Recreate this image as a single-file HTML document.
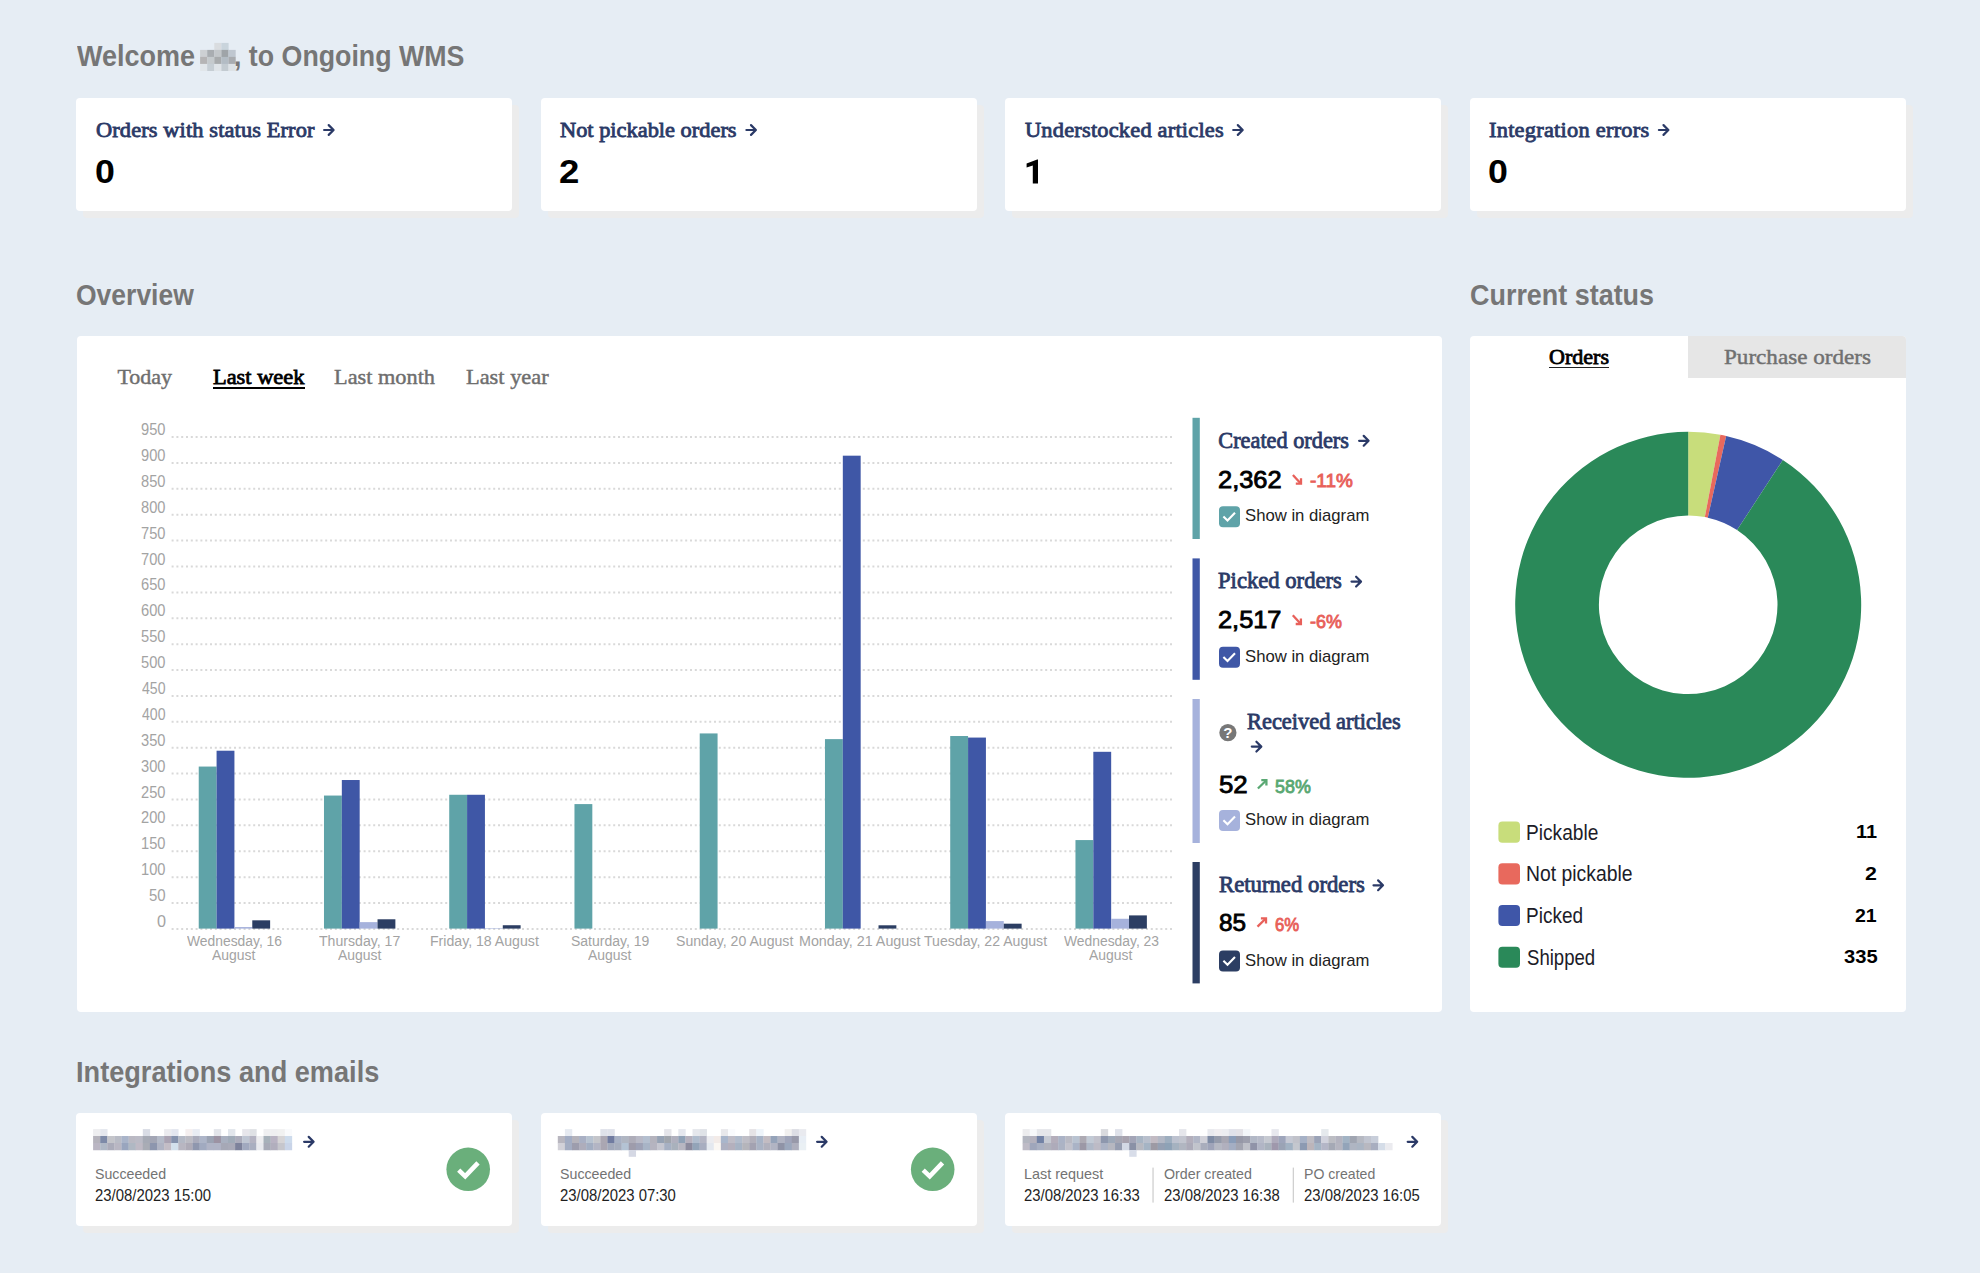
<!DOCTYPE html>
<html><head><meta charset="utf-8"><style>
html,body{margin:0;padding:0;}
body{width:1980px;height:1273px;background:#e6edf4;position:relative;overflow:hidden;font-family:"Liberation Sans",sans-serif;}
.r{position:absolute;}
.t{position:absolute;white-space:nowrap;transform-origin:0 0;}
svg{position:absolute;left:0;top:0;}
</style></head><body>
<div class="r" style="left:76px;top:97.5px;width:436px;height:113.0px;background:#fff;border-radius:4px;box-shadow:7px 7px 0 #ececec;"></div><div class="r" style="left:541px;top:97.5px;width:436px;height:113.0px;background:#fff;border-radius:4px;box-shadow:7px 7px 0 #ececec;"></div><div class="r" style="left:1005px;top:97.5px;width:436px;height:113.0px;background:#fff;border-radius:4px;box-shadow:7px 7px 0 #ececec;"></div><div class="r" style="left:1470px;top:97.5px;width:436px;height:113.0px;background:#fff;border-radius:4px;box-shadow:7px 7px 0 #ececec;"></div><div class="r" style="left:76px;top:1112.5px;width:436px;height:113.5px;background:#fff;border-radius:4px;box-shadow:7px 7px 0 #ececec;"></div><div class="r" style="left:541px;top:1112.5px;width:436px;height:113.5px;background:#fff;border-radius:4px;box-shadow:7px 7px 0 #ececec;"></div><div class="r" style="left:1005px;top:1112.5px;width:436px;height:113.5px;background:#fff;border-radius:4px;box-shadow:7px 7px 0 #ececec;"></div><div class="r" style="left:76.5px;top:336px;width:1365.0px;height:676px;background:#fff;border-radius:4px;"></div><div class="r" style="left:1470px;top:336px;width:436px;height:675.5px;background:#fff;border-radius:4px;overflow:hidden;"></div><div class="r" style="left:1688px;top:336px;width:218px;height:42.30000000000001px;background:#e6e6e6;border-top-right-radius:4px;"></div><div class="r" style="left:213.2px;top:387.0px;width:91.69999999999999px;height:2.3999999999999773px;background:#000;"></div><div class="r" style="left:1548.8px;top:366.5px;width:60.700000000000045px;height:1.5px;background:#222;"></div>
<svg width="1980" height="1273" viewBox="0 0 1980 1273">
<path d="M324.10 130.00 H333.00 M328.70 125.10 L333.60 130.00 L328.70 134.90" stroke="#2b3a67" stroke-width="2.2" fill="none" stroke-linecap="round" stroke-linejoin="round"/><path d="M746.40 130.00 H755.30 M751.00 125.10 L755.90 130.00 L751.00 134.90" stroke="#2b3a67" stroke-width="2.2" fill="none" stroke-linecap="round" stroke-linejoin="round"/><path d="M1233.20 130.00 H1242.10 M1237.80 125.10 L1242.70 130.00 L1237.80 134.90" stroke="#2b3a67" stroke-width="2.2" fill="none" stroke-linecap="round" stroke-linejoin="round"/><path d="M1658.90 130.00 H1667.80 M1663.50 125.10 L1668.40 130.00 L1663.50 134.90" stroke="#2b3a67" stroke-width="2.2" fill="none" stroke-linecap="round" stroke-linejoin="round"/><path d="M1359.10 440.80 H1368.00 M1363.70 435.90 L1368.60 440.80 L1363.70 445.70" stroke="#2b3a67" stroke-width="2.2" fill="none" stroke-linecap="round" stroke-linejoin="round"/><path d="M1351.50 581.60 H1360.40 M1356.10 576.70 L1361.00 581.60 L1356.10 586.50" stroke="#2b3a67" stroke-width="2.2" fill="none" stroke-linecap="round" stroke-linejoin="round"/><path d="M1251.80 746.60 H1260.70 M1256.40 741.70 L1261.30 746.60 L1256.40 751.50" stroke="#2b3a67" stroke-width="2.2" fill="none" stroke-linecap="round" stroke-linejoin="round"/><path d="M1373.50 885.30 H1382.40 M1378.10 880.40 L1383.00 885.30 L1378.10 890.20" stroke="#2b3a67" stroke-width="2.2" fill="none" stroke-linecap="round" stroke-linejoin="round"/><rect x="1192.5" y="417.8" width="7.3" height="121.19999999999999" fill="#5fa3a8"/><rect x="1219" y="506.3" width="21" height="21" rx="4" fill="#5fa3a8"/><path d="M1223.4 516.60 L1227.5 520.60 L1235 512.80" stroke="#fff" stroke-width="2.1" fill="none"/><path d="M1292.90 475.00 L1300.50 483.20" stroke="#e8605a" stroke-width="2.3" fill="none"/><path d="M1295.80 483.70 H1301.00 V478.20" stroke="#e8605a" stroke-width="2.3" fill="none" stroke-linejoin="miter"/><rect x="1192.5" y="558.4" width="7.3" height="121.39999999999998" fill="#3f57a6"/><rect x="1219" y="646.8" width="21" height="21" rx="4" fill="#3f57a6"/><path d="M1223.4 657.10 L1227.5 661.10 L1235 653.30" stroke="#fff" stroke-width="2.1" fill="none"/><path d="M1292.80 615.30 L1300.40 623.50" stroke="#e8605a" stroke-width="2.3" fill="none"/><path d="M1295.70 624.00 H1300.90 V618.50" stroke="#e8605a" stroke-width="2.3" fill="none" stroke-linejoin="miter"/><rect x="1192.5" y="699.0" width="7.3" height="144.0" fill="#a6b2dc"/><rect x="1219" y="810.0" width="21" height="21" rx="4" fill="#a6b2dc"/><path d="M1223.4 820.30 L1227.5 824.30 L1235 816.50" stroke="#fff" stroke-width="2.1" fill="none"/><path d="M1257.90 788.50 L1265.90 780.70" stroke="#5aa873" stroke-width="2.3" fill="none"/><path d="M1261.30 780.20 H1266.40 V785.50" stroke="#5aa873" stroke-width="2.3" fill="none" stroke-linejoin="miter"/><rect x="1192.5" y="862.0" width="7.3" height="121.39999999999998" fill="#2c3e63"/><rect x="1219" y="950.5" width="21" height="21" rx="4" fill="#2c3e63"/><path d="M1223.4 960.80 L1227.5 964.80 L1235 957.00" stroke="#fff" stroke-width="2.1" fill="none"/><path d="M1257.50 926.60 L1265.50 918.80" stroke="#e8605a" stroke-width="2.3" fill="none"/><path d="M1260.90 918.30 H1266.00 V923.60" stroke="#e8605a" stroke-width="2.3" fill="none" stroke-linejoin="miter"/><path d="M1038 159.4 V183.5 H1032.8 V165.4 L1026.6 167.4 V163.5 L1037.2 159.4 Z" fill="#000"/><circle cx="1227.9" cy="732.7" r="8.6" fill="#777"/><text x="1227.9" y="737.9" font-family="Liberation Sans" font-weight="700" font-size="15" fill="#fff" text-anchor="middle">?</text><line x1="171.6" y1="928.90" x2="1173.8" y2="928.90" stroke="#d9d9d9" stroke-width="2" stroke-dasharray="2 2.8"/><line x1="171.6" y1="903.01" x2="1173.8" y2="903.01" stroke="#d9d9d9" stroke-width="2" stroke-dasharray="2 2.8"/><line x1="171.6" y1="877.13" x2="1173.8" y2="877.13" stroke="#d9d9d9" stroke-width="2" stroke-dasharray="2 2.8"/><line x1="171.6" y1="851.25" x2="1173.8" y2="851.25" stroke="#d9d9d9" stroke-width="2" stroke-dasharray="2 2.8"/><line x1="171.6" y1="825.36" x2="1173.8" y2="825.36" stroke="#d9d9d9" stroke-width="2" stroke-dasharray="2 2.8"/><line x1="171.6" y1="799.47" x2="1173.8" y2="799.47" stroke="#d9d9d9" stroke-width="2" stroke-dasharray="2 2.8"/><line x1="171.6" y1="773.59" x2="1173.8" y2="773.59" stroke="#d9d9d9" stroke-width="2" stroke-dasharray="2 2.8"/><line x1="171.6" y1="747.70" x2="1173.8" y2="747.70" stroke="#d9d9d9" stroke-width="2" stroke-dasharray="2 2.8"/><line x1="171.6" y1="721.82" x2="1173.8" y2="721.82" stroke="#d9d9d9" stroke-width="2" stroke-dasharray="2 2.8"/><line x1="171.6" y1="695.93" x2="1173.8" y2="695.93" stroke="#d9d9d9" stroke-width="2" stroke-dasharray="2 2.8"/><line x1="171.6" y1="670.05" x2="1173.8" y2="670.05" stroke="#d9d9d9" stroke-width="2" stroke-dasharray="2 2.8"/><line x1="171.6" y1="644.16" x2="1173.8" y2="644.16" stroke="#d9d9d9" stroke-width="2" stroke-dasharray="2 2.8"/><line x1="171.6" y1="618.28" x2="1173.8" y2="618.28" stroke="#d9d9d9" stroke-width="2" stroke-dasharray="2 2.8"/><line x1="171.6" y1="592.39" x2="1173.8" y2="592.39" stroke="#d9d9d9" stroke-width="2" stroke-dasharray="2 2.8"/><line x1="171.6" y1="566.51" x2="1173.8" y2="566.51" stroke="#d9d9d9" stroke-width="2" stroke-dasharray="2 2.8"/><line x1="171.6" y1="540.62" x2="1173.8" y2="540.62" stroke="#d9d9d9" stroke-width="2" stroke-dasharray="2 2.8"/><line x1="171.6" y1="514.74" x2="1173.8" y2="514.74" stroke="#d9d9d9" stroke-width="2" stroke-dasharray="2 2.8"/><line x1="171.6" y1="488.86" x2="1173.8" y2="488.86" stroke="#d9d9d9" stroke-width="2" stroke-dasharray="2 2.8"/><line x1="171.6" y1="462.97" x2="1173.8" y2="462.97" stroke="#d9d9d9" stroke-width="2" stroke-dasharray="2 2.8"/><line x1="171.6" y1="437.08" x2="1173.8" y2="437.08" stroke="#d9d9d9" stroke-width="2" stroke-dasharray="2 2.8"/><rect x="198.73" y="766.56" width="17.85" height="162.04" fill="#5fa3a8"/><rect x="216.58" y="750.72" width="17.85" height="177.88" fill="#3f57a6"/><rect x="234.43" y="927.05" width="17.85" height="1.55" fill="#a6b2dc"/><rect x="252.28" y="920.32" width="17.85" height="8.28" fill="#2c3e63"/><rect x="323.98" y="795.55" width="17.85" height="133.05" fill="#5fa3a8"/><rect x="341.83" y="780.02" width="17.85" height="148.58" fill="#3f57a6"/><rect x="359.68" y="922.13" width="17.85" height="6.47" fill="#a6b2dc"/><rect x="377.53" y="919.28" width="17.85" height="9.32" fill="#2c3e63"/><rect x="449.23" y="794.77" width="17.85" height="133.83" fill="#5fa3a8"/><rect x="467.08" y="794.77" width="17.85" height="133.83" fill="#3f57a6"/><rect x="484.93" y="928.08" width="17.85" height="0.52" fill="#a6b2dc"/><rect x="502.78" y="925.23" width="17.85" height="3.37" fill="#2c3e63"/><rect x="574.47" y="804.09" width="17.85" height="124.51" fill="#5fa3a8"/><rect x="699.72" y="733.43" width="17.85" height="195.17" fill="#5fa3a8"/><rect x="824.97" y="739.12" width="17.85" height="189.48" fill="#5fa3a8"/><rect x="842.82" y="455.68" width="17.85" height="472.92" fill="#3f57a6"/><rect x="878.52" y="925.29" width="17.85" height="3.31" fill="#2c3e63"/><rect x="950.22" y="736.02" width="17.85" height="192.58" fill="#5fa3a8"/><rect x="968.07" y="737.57" width="17.85" height="191.03" fill="#3f57a6"/><rect x="985.92" y="921.09" width="17.85" height="7.51" fill="#a6b2dc"/><rect x="1003.77" y="923.68" width="17.85" height="4.92" fill="#2c3e63"/><rect x="1075.47" y="840.07" width="17.85" height="88.53" fill="#5fa3a8"/><rect x="1093.32" y="751.81" width="17.85" height="176.79" fill="#3f57a6"/><rect x="1111.17" y="918.76" width="17.85" height="9.84" fill="#a6b2dc"/><rect x="1129.02" y="915.40" width="17.85" height="13.20" fill="#2c3e63"/><path d="M1688.20 431.80 A173.0 173.0 0 0 1 1720.41 434.83 L1704.83 517.06 A89.3 89.3 0 0 0 1688.20 515.50 Z" fill="#c8dd7b"/><path d="M1720.41 434.83 A173.0 173.0 0 0 1 1726.18 436.02 L1707.81 517.68 A89.3 89.3 0 0 0 1704.83 517.06 Z" fill="#e8695d"/><path d="M1726.18 436.02 A173.0 173.0 0 0 1 1782.85 459.99 L1737.06 530.05 A89.3 89.3 0 0 0 1707.81 517.68 Z" fill="#3f56a8"/><path d="M1782.85 459.99 A173.0 173.0 0 1 1 1688.20 431.80 L1688.20 515.50 A89.3 89.3 0 1 0 1737.06 530.05 Z" fill="#2a8959"/><rect x="1498.4" y="821.6" width="21.6" height="21.1" rx="4" fill="#c8dd7b"/><rect x="1498.4" y="863.3" width="21.6" height="21.1" rx="4" fill="#e8695d"/><rect x="1498.4" y="905.0" width="21.6" height="21.1" rx="4" fill="#3f56a8"/><rect x="1498.4" y="946.7" width="21.6" height="21.1" rx="4" fill="#2a8959"/><path d="M304.10 1141.80 H313.00 M308.70 1136.90 L313.60 1141.80 L308.70 1146.70" stroke="#2b3a67" stroke-width="2.2" fill="none" stroke-linecap="round" stroke-linejoin="round"/><path d="M817.10 1141.80 H826.00 M821.70 1136.90 L826.60 1141.80 L821.70 1146.70" stroke="#2b3a67" stroke-width="2.2" fill="none" stroke-linecap="round" stroke-linejoin="round"/><path d="M1407.70 1141.80 H1416.60 M1412.30 1136.90 L1417.20 1141.80 L1412.30 1146.70" stroke="#2b3a67" stroke-width="2.2" fill="none" stroke-linecap="round" stroke-linejoin="round"/><circle cx="468.2" cy="1169.3" r="21.8" fill="#6aaf7b"/><path d="M458.7 1170.1 L465.2 1176.3 L478.0 1162.8" stroke="#fff" stroke-width="4.6" fill="none"/><circle cx="932.7" cy="1169.3" r="21.8" fill="#6aaf7b"/><path d="M923.2 1170.1 L929.7 1176.3 L942.5 1162.8" stroke="#fff" stroke-width="4.6" fill="none"/><rect x="1152.4" y="1167.6" width="1.3" height="35" fill="#d0d0d0"/><rect x="1292.7" y="1167.6" width="1.3" height="35" fill="#d0d0d0"/><rect x="93.10" y="1129.10" width="7.35" height="7.15" fill="#eeeef0"/><rect x="100.20" y="1129.10" width="7.35" height="7.15" fill="#e4e7ee"/><rect x="142.80" y="1129.10" width="7.35" height="7.15" fill="#d9dce5"/><rect x="164.10" y="1129.10" width="7.35" height="7.15" fill="#ebebef"/><rect x="171.20" y="1129.10" width="7.35" height="7.15" fill="#e3e6ef"/><rect x="185.40" y="1129.10" width="7.35" height="7.15" fill="#f5efef"/><rect x="192.50" y="1129.10" width="7.35" height="7.15" fill="#e8ecf3"/><rect x="213.80" y="1129.10" width="7.35" height="7.15" fill="#e3e5ea"/><rect x="228.00" y="1129.10" width="7.35" height="7.15" fill="#e2e6ec"/><rect x="242.20" y="1129.10" width="7.35" height="7.15" fill="#e7e6eb"/><rect x="249.30" y="1129.10" width="7.35" height="7.15" fill="#dfe1e5"/><rect x="263.50" y="1129.10" width="7.35" height="7.15" fill="#efeff1"/><rect x="270.60" y="1129.10" width="7.35" height="7.15" fill="#efeff1"/><rect x="277.70" y="1129.10" width="7.35" height="7.15" fill="#f1f1f1"/><rect x="284.80" y="1129.10" width="7.35" height="7.15" fill="#f9fafc"/><rect x="93.10" y="1136.00" width="7.35" height="7.25" fill="#b5b3bc"/><rect x="100.20" y="1136.00" width="7.35" height="7.25" fill="#7d8aa8"/><rect x="107.30" y="1136.00" width="7.35" height="7.25" fill="#c4c5ca"/><rect x="114.40" y="1136.00" width="7.35" height="7.25" fill="#b9bcc6"/><rect x="121.50" y="1136.00" width="7.35" height="7.25" fill="#a9b4c9"/><rect x="128.60" y="1136.00" width="7.35" height="7.25" fill="#bab9c3"/><rect x="135.70" y="1136.00" width="7.35" height="7.25" fill="#bbbbc6"/><rect x="142.80" y="1136.00" width="7.35" height="7.25" fill="#a6aab5"/><rect x="149.90" y="1136.00" width="7.35" height="7.25" fill="#a3a6b5"/><rect x="157.00" y="1136.00" width="7.35" height="7.25" fill="#b4bac8"/><rect x="164.10" y="1136.00" width="7.35" height="7.25" fill="#aaa3b3"/><rect x="171.20" y="1136.00" width="7.35" height="7.25" fill="#8592ad"/><rect x="178.30" y="1136.00" width="7.35" height="7.25" fill="#b4b9c5"/><rect x="185.40" y="1136.00" width="7.35" height="7.25" fill="#bbbbc3"/><rect x="192.50" y="1136.00" width="7.35" height="7.25" fill="#a9abbb"/><rect x="199.60" y="1136.00" width="7.35" height="7.25" fill="#adb5c8"/><rect x="206.70" y="1136.00" width="7.35" height="7.25" fill="#9ba3b3"/><rect x="213.80" y="1136.00" width="7.35" height="7.25" fill="#9c93a3"/><rect x="220.90" y="1136.00" width="7.35" height="7.25" fill="#a9b0c0"/><rect x="228.00" y="1136.00" width="7.35" height="7.25" fill="#a0abb8"/><rect x="235.10" y="1136.00" width="7.35" height="7.25" fill="#abacbb"/><rect x="242.20" y="1136.00" width="7.35" height="7.25" fill="#bfc6d3"/><rect x="249.30" y="1136.00" width="7.35" height="7.25" fill="#b4b3c2"/><rect x="256.40" y="1136.00" width="7.35" height="7.25" fill="#ececef"/><rect x="263.50" y="1136.00" width="7.35" height="7.25" fill="#a7b1ba"/><rect x="270.60" y="1136.00" width="7.35" height="7.25" fill="#b9b3c3"/><rect x="277.70" y="1136.00" width="7.35" height="7.25" fill="#d6d4d6"/><rect x="284.80" y="1136.00" width="7.35" height="7.25" fill="#cddbec"/><rect x="93.10" y="1143.00" width="7.35" height="7.25" fill="#bab6c3"/><rect x="100.20" y="1143.00" width="7.35" height="7.25" fill="#afb8c6"/><rect x="107.30" y="1143.00" width="7.35" height="7.25" fill="#abacba"/><rect x="114.40" y="1143.00" width="7.35" height="7.25" fill="#b9b7c3"/><rect x="121.50" y="1143.00" width="7.35" height="7.25" fill="#99a5be"/><rect x="128.60" y="1143.00" width="7.35" height="7.25" fill="#b0b8c3"/><rect x="135.70" y="1143.00" width="7.35" height="7.25" fill="#bfbac5"/><rect x="142.80" y="1143.00" width="7.35" height="7.25" fill="#a9acb5"/><rect x="149.90" y="1143.00" width="7.35" height="7.25" fill="#8d96ae"/><rect x="157.00" y="1143.00" width="7.35" height="7.25" fill="#b0b4c4"/><rect x="164.10" y="1143.00" width="7.35" height="7.25" fill="#c3bdc6"/><rect x="171.20" y="1143.00" width="7.35" height="7.25" fill="#d3e0ec"/><rect x="178.30" y="1143.00" width="7.35" height="7.25" fill="#b8b6c1"/><rect x="185.40" y="1143.00" width="7.35" height="7.25" fill="#aeabb7"/><rect x="192.50" y="1143.00" width="7.35" height="7.25" fill="#8f97ae"/><rect x="199.60" y="1143.00" width="7.35" height="7.25" fill="#a1aac0"/><rect x="206.70" y="1143.00" width="7.35" height="7.25" fill="#b0b4c6"/><rect x="213.80" y="1143.00" width="7.35" height="7.25" fill="#b0b4c6"/><rect x="220.90" y="1143.00" width="7.35" height="7.25" fill="#a6a8b6"/><rect x="228.00" y="1143.00" width="7.35" height="7.25" fill="#a9aab8"/><rect x="235.10" y="1143.00" width="7.35" height="7.25" fill="#7d829b"/><rect x="242.20" y="1143.00" width="7.35" height="7.25" fill="#a1a9bf"/><rect x="249.30" y="1143.00" width="7.35" height="7.25" fill="#a9aec0"/><rect x="256.40" y="1143.00" width="7.35" height="7.25" fill="#e8e9ee"/><rect x="263.50" y="1143.00" width="7.35" height="7.25" fill="#a8abb8"/><rect x="270.60" y="1143.00" width="7.35" height="7.25" fill="#b1aebd"/><rect x="277.70" y="1143.00" width="7.35" height="7.25" fill="#c6c6cc"/><rect x="284.80" y="1143.00" width="7.35" height="7.25" fill="#c9d4e8"/><rect x="564.89" y="1129.10" width="7.34" height="7.15" fill="#e6eaf1"/><rect x="600.34" y="1129.10" width="7.34" height="7.15" fill="#dfe2ea"/><rect x="607.43" y="1129.10" width="7.34" height="7.15" fill="#dfe2ea"/><rect x="664.15" y="1129.10" width="7.34" height="7.15" fill="#e5e5ea"/><rect x="678.33" y="1129.10" width="7.34" height="7.15" fill="#e5e7ee"/><rect x="692.51" y="1129.10" width="7.34" height="7.15" fill="#e5e7ec"/><rect x="699.60" y="1129.10" width="7.34" height="7.15" fill="#dfe2e7"/><rect x="720.87" y="1129.10" width="7.34" height="7.15" fill="#e8e8eb"/><rect x="727.96" y="1129.10" width="7.34" height="7.15" fill="#fafbfd"/><rect x="749.23" y="1129.10" width="7.34" height="7.15" fill="#e5e3e6"/><rect x="756.32" y="1129.10" width="7.34" height="7.15" fill="#eef4fa"/><rect x="784.68" y="1129.10" width="7.34" height="7.15" fill="#f1f0ef"/><rect x="791.77" y="1129.10" width="7.34" height="7.15" fill="#dcdde4"/><rect x="798.86" y="1129.10" width="7.34" height="7.15" fill="#e9eaef"/><rect x="557.80" y="1136.00" width="7.34" height="7.25" fill="#b8b6bf"/><rect x="564.89" y="1136.00" width="7.34" height="7.25" fill="#a2acc3"/><rect x="571.98" y="1136.00" width="7.34" height="7.25" fill="#b5b3bb"/><rect x="579.07" y="1136.00" width="7.34" height="7.25" fill="#a9b0c4"/><rect x="586.16" y="1136.00" width="7.34" height="7.25" fill="#b7c2d0"/><rect x="593.25" y="1136.00" width="7.34" height="7.25" fill="#c4c5ca"/><rect x="600.34" y="1136.00" width="7.34" height="7.25" fill="#aba7b2"/><rect x="607.43" y="1136.00" width="7.34" height="7.25" fill="#707ba0"/><rect x="614.52" y="1136.00" width="7.34" height="7.25" fill="#a8b1c4"/><rect x="621.61" y="1136.00" width="7.34" height="7.25" fill="#b0b6c2"/><rect x="628.70" y="1136.00" width="7.34" height="7.25" fill="#aeadb9"/><rect x="635.79" y="1136.00" width="7.34" height="7.25" fill="#b8b9c6"/><rect x="642.88" y="1136.00" width="7.34" height="7.25" fill="#b4bfcf"/><rect x="649.97" y="1136.00" width="7.34" height="7.25" fill="#b4b3bd"/><rect x="657.06" y="1136.00" width="7.34" height="7.25" fill="#96a2b4"/><rect x="664.15" y="1136.00" width="7.34" height="7.25" fill="#a0a5ad"/><rect x="671.24" y="1136.00" width="7.34" height="7.25" fill="#b0b0be"/><rect x="678.33" y="1136.00" width="7.34" height="7.25" fill="#8fa1b6"/><rect x="685.42" y="1136.00" width="7.34" height="7.25" fill="#b5b0bd"/><rect x="692.51" y="1136.00" width="7.34" height="7.25" fill="#afbccd"/><rect x="699.60" y="1136.00" width="7.34" height="7.25" fill="#b4b5c4"/><rect x="706.69" y="1136.00" width="7.34" height="7.25" fill="#ececf0"/><rect x="713.78" y="1136.00" width="7.34" height="7.25" fill="#f3ebe8"/><rect x="720.87" y="1136.00" width="7.34" height="7.25" fill="#a9b6cb"/><rect x="727.96" y="1136.00" width="7.34" height="7.25" fill="#bfbdc7"/><rect x="735.05" y="1136.00" width="7.34" height="7.25" fill="#b2bccc"/><rect x="742.14" y="1136.00" width="7.34" height="7.25" fill="#bfbec6"/><rect x="749.23" y="1136.00" width="7.34" height="7.25" fill="#b1afba"/><rect x="756.32" y="1136.00" width="7.34" height="7.25" fill="#a7b3c6"/><rect x="763.41" y="1136.00" width="7.34" height="7.25" fill="#c3bcc2"/><rect x="770.50" y="1136.00" width="7.34" height="7.25" fill="#95a3b9"/><rect x="777.59" y="1136.00" width="7.34" height="7.25" fill="#b0b3c2"/><rect x="784.68" y="1136.00" width="7.34" height="7.25" fill="#a0a5ba"/><rect x="791.77" y="1136.00" width="7.34" height="7.25" fill="#9899a9"/><rect x="798.86" y="1136.00" width="7.34" height="7.25" fill="#e8eef5"/><rect x="557.80" y="1143.00" width="7.34" height="7.25" fill="#d2d1d8"/><rect x="564.89" y="1143.00" width="7.34" height="7.25" fill="#a4adc2"/><rect x="571.98" y="1143.00" width="7.34" height="7.25" fill="#9d9dad"/><rect x="579.07" y="1143.00" width="7.34" height="7.25" fill="#aeadbb"/><rect x="586.16" y="1143.00" width="7.34" height="7.25" fill="#a3aec2"/><rect x="593.25" y="1143.00" width="7.34" height="7.25" fill="#b3b5c4"/><rect x="600.34" y="1143.00" width="7.34" height="7.25" fill="#aaa6b2"/><rect x="607.43" y="1143.00" width="7.34" height="7.25" fill="#a2a9bb"/><rect x="614.52" y="1143.00" width="7.34" height="7.25" fill="#a6adbd"/><rect x="621.61" y="1143.00" width="7.34" height="7.25" fill="#b4c3d4"/><rect x="628.70" y="1143.00" width="7.34" height="7.25" fill="#9e9cab"/><rect x="635.79" y="1143.00" width="7.34" height="7.25" fill="#9ea2b6"/><rect x="642.88" y="1143.00" width="7.34" height="7.25" fill="#a8b4c6"/><rect x="649.97" y="1143.00" width="7.34" height="7.25" fill="#b5b4c0"/><rect x="657.06" y="1143.00" width="7.34" height="7.25" fill="#c5c6d0"/><rect x="664.15" y="1143.00" width="7.34" height="7.25" fill="#a6b0c3"/><rect x="671.24" y="1143.00" width="7.34" height="7.25" fill="#a9b1bc"/><rect x="678.33" y="1143.00" width="7.34" height="7.25" fill="#b7b6c1"/><rect x="685.42" y="1143.00" width="7.34" height="7.25" fill="#8b8a9d"/><rect x="692.51" y="1143.00" width="7.34" height="7.25" fill="#93a4b8"/><rect x="699.60" y="1143.00" width="7.34" height="7.25" fill="#a8adc0"/><rect x="706.69" y="1143.00" width="7.34" height="7.25" fill="#e4e8ef"/><rect x="713.78" y="1143.00" width="7.34" height="7.25" fill="#fbf7f3"/><rect x="720.87" y="1143.00" width="7.34" height="7.25" fill="#aeb1c2"/><rect x="727.96" y="1143.00" width="7.34" height="7.25" fill="#b4b0bd"/><rect x="735.05" y="1143.00" width="7.34" height="7.25" fill="#a7b3c4"/><rect x="742.14" y="1143.00" width="7.34" height="7.25" fill="#b5b5bb"/><rect x="749.23" y="1143.00" width="7.34" height="7.25" fill="#a3a2b1"/><rect x="756.32" y="1143.00" width="7.34" height="7.25" fill="#aab3c4"/><rect x="763.41" y="1143.00" width="7.34" height="7.25" fill="#b1b1bd"/><rect x="770.50" y="1143.00" width="7.34" height="7.25" fill="#b1b4c3"/><rect x="777.59" y="1143.00" width="7.34" height="7.25" fill="#8f93a6"/><rect x="784.68" y="1143.00" width="7.34" height="7.25" fill="#9ba7bc"/><rect x="791.77" y="1143.00" width="7.34" height="7.25" fill="#aeafbd"/><rect x="798.86" y="1143.00" width="7.34" height="7.25" fill="#eaf0f4"/><rect x="628.70" y="1150" width="7.34" height="6.8" fill="#d5d8e4"/><rect x="1022.60" y="1129.10" width="7.36" height="7.15" fill="#ececee"/><rect x="1029.71" y="1129.10" width="7.36" height="7.15" fill="#f7f8fa"/><rect x="1036.82" y="1129.10" width="7.36" height="7.15" fill="#e5e6ea"/><rect x="1043.93" y="1129.10" width="7.36" height="7.15" fill="#e5e6ea"/><rect x="1100.81" y="1129.10" width="7.36" height="7.15" fill="#d9dade"/><rect x="1115.03" y="1129.10" width="7.36" height="7.15" fill="#dfe2ea"/><rect x="1179.02" y="1129.10" width="7.36" height="7.15" fill="#e5e6eb"/><rect x="1207.46" y="1129.10" width="7.36" height="7.15" fill="#e8e9ee"/><rect x="1214.57" y="1129.10" width="7.36" height="7.15" fill="#efedf0"/><rect x="1221.68" y="1129.10" width="7.36" height="7.15" fill="#ecedf1"/><rect x="1228.79" y="1129.10" width="7.36" height="7.15" fill="#e0e2ea"/><rect x="1235.90" y="1129.10" width="7.36" height="7.15" fill="#e3e2e7"/><rect x="1243.01" y="1129.10" width="7.36" height="7.15" fill="#f3f6f9"/><rect x="1271.45" y="1129.10" width="7.36" height="7.15" fill="#e7e8ee"/><rect x="1321.22" y="1129.10" width="7.36" height="7.15" fill="#e5e9ed"/><rect x="1022.60" y="1136.00" width="7.36" height="7.25" fill="#b3b6c0"/><rect x="1029.71" y="1136.00" width="7.36" height="7.25" fill="#b3b1bd"/><rect x="1036.82" y="1136.00" width="7.36" height="7.25" fill="#7282a5"/><rect x="1043.93" y="1136.00" width="7.36" height="7.25" fill="#c6cad3"/><rect x="1051.04" y="1136.00" width="7.36" height="7.25" fill="#b4aebb"/><rect x="1058.15" y="1136.00" width="7.36" height="7.25" fill="#abb3c6"/><rect x="1065.26" y="1136.00" width="7.36" height="7.25" fill="#b9bac4"/><rect x="1072.37" y="1136.00" width="7.36" height="7.25" fill="#b9c3d1"/><rect x="1079.48" y="1136.00" width="7.36" height="7.25" fill="#adaab3"/><rect x="1086.59" y="1136.00" width="7.36" height="7.25" fill="#c2cad5"/><rect x="1093.70" y="1136.00" width="7.36" height="7.25" fill="#c1c1cb"/><rect x="1100.81" y="1136.00" width="7.36" height="7.25" fill="#8e97ad"/><rect x="1107.92" y="1136.00" width="7.36" height="7.25" fill="#9ea9b9"/><rect x="1115.03" y="1136.00" width="7.36" height="7.25" fill="#a5a6b3"/><rect x="1122.14" y="1136.00" width="7.36" height="7.25" fill="#a7a2ae"/><rect x="1129.25" y="1136.00" width="7.36" height="7.25" fill="#a3a5b7"/><rect x="1136.36" y="1136.00" width="7.36" height="7.25" fill="#a8b5c4"/><rect x="1143.47" y="1136.00" width="7.36" height="7.25" fill="#b8bfcc"/><rect x="1150.58" y="1136.00" width="7.36" height="7.25" fill="#c2bbc3"/><rect x="1157.69" y="1136.00" width="7.36" height="7.25" fill="#b3b8c5"/><rect x="1164.80" y="1136.00" width="7.36" height="7.25" fill="#9eaebf"/><rect x="1171.91" y="1136.00" width="7.36" height="7.25" fill="#bdc2cf"/><rect x="1179.02" y="1136.00" width="7.36" height="7.25" fill="#c2c5cf"/><rect x="1186.13" y="1136.00" width="7.36" height="7.25" fill="#b3afbc"/><rect x="1193.24" y="1136.00" width="7.36" height="7.25" fill="#b1b6c6"/><rect x="1200.35" y="1136.00" width="7.36" height="7.25" fill="#d0d0d8"/><rect x="1207.46" y="1136.00" width="7.36" height="7.25" fill="#7e8ba4"/><rect x="1214.57" y="1136.00" width="7.36" height="7.25" fill="#959bab"/><rect x="1221.68" y="1136.00" width="7.36" height="7.25" fill="#a8a7b3"/><rect x="1228.79" y="1136.00" width="7.36" height="7.25" fill="#8a9db9"/><rect x="1235.90" y="1136.00" width="7.36" height="7.25" fill="#9698a7"/><rect x="1243.01" y="1136.00" width="7.36" height="7.25" fill="#9d9fad"/><rect x="1250.12" y="1136.00" width="7.36" height="7.25" fill="#b2b8c6"/><rect x="1257.23" y="1136.00" width="7.36" height="7.25" fill="#b7bbc9"/><rect x="1264.34" y="1136.00" width="7.36" height="7.25" fill="#c6c9d1"/><rect x="1271.45" y="1136.00" width="7.36" height="7.25" fill="#aeaabb"/><rect x="1278.56" y="1136.00" width="7.36" height="7.25" fill="#9ea5bb"/><rect x="1285.67" y="1136.00" width="7.36" height="7.25" fill="#c6c9d4"/><rect x="1292.78" y="1136.00" width="7.36" height="7.25" fill="#c1c2ca"/><rect x="1299.89" y="1136.00" width="7.36" height="7.25" fill="#a6b1c6"/><rect x="1307.00" y="1136.00" width="7.36" height="7.25" fill="#bebcc3"/><rect x="1314.11" y="1136.00" width="7.36" height="7.25" fill="#9ba3b7"/><rect x="1321.22" y="1136.00" width="7.36" height="7.25" fill="#d1d2dd"/><rect x="1328.33" y="1136.00" width="7.36" height="7.25" fill="#bcbdc3"/><rect x="1335.44" y="1136.00" width="7.36" height="7.25" fill="#b3b3bf"/><rect x="1342.55" y="1136.00" width="7.36" height="7.25" fill="#a2b3c4"/><rect x="1349.66" y="1136.00" width="7.36" height="7.25" fill="#a0a5b1"/><rect x="1356.77" y="1136.00" width="7.36" height="7.25" fill="#b6b9c2"/><rect x="1363.88" y="1136.00" width="7.36" height="7.25" fill="#c1c5d0"/><rect x="1370.99" y="1136.00" width="7.36" height="7.25" fill="#c8ceda"/><rect x="1022.60" y="1143.00" width="7.36" height="7.25" fill="#bebbc6"/><rect x="1029.71" y="1143.00" width="7.36" height="7.25" fill="#9fa6bb"/><rect x="1036.82" y="1143.00" width="7.36" height="7.25" fill="#a9b0c2"/><rect x="1043.93" y="1143.00" width="7.36" height="7.25" fill="#b0b2bd"/><rect x="1051.04" y="1143.00" width="7.36" height="7.25" fill="#aeabba"/><rect x="1058.15" y="1143.00" width="7.36" height="7.25" fill="#acb3c4"/><rect x="1065.26" y="1143.00" width="7.36" height="7.25" fill="#c2c2cc"/><rect x="1072.37" y="1143.00" width="7.36" height="7.25" fill="#aab3c6"/><rect x="1079.48" y="1143.00" width="7.36" height="7.25" fill="#9c98a6"/><rect x="1086.59" y="1143.00" width="7.36" height="7.25" fill="#b0b9c8"/><rect x="1093.70" y="1143.00" width="7.36" height="7.25" fill="#bdbbc6"/><rect x="1100.81" y="1143.00" width="7.36" height="7.25" fill="#acb3c5"/><rect x="1107.92" y="1143.00" width="7.36" height="7.25" fill="#b6b7c0"/><rect x="1115.03" y="1143.00" width="7.36" height="7.25" fill="#969db0"/><rect x="1122.14" y="1143.00" width="7.36" height="7.25" fill="#d3d9e5"/><rect x="1129.25" y="1143.00" width="7.36" height="7.25" fill="#8a91a6"/><rect x="1136.36" y="1143.00" width="7.36" height="7.25" fill="#b7b9c1"/><rect x="1143.47" y="1143.00" width="7.36" height="7.25" fill="#a5b4c4"/><rect x="1150.58" y="1143.00" width="7.36" height="7.25" fill="#9d9aa4"/><rect x="1157.69" y="1143.00" width="7.36" height="7.25" fill="#95a0b3"/><rect x="1164.80" y="1143.00" width="7.36" height="7.25" fill="#8ea2b6"/><rect x="1171.91" y="1143.00" width="7.36" height="7.25" fill="#a5b2c0"/><rect x="1179.02" y="1143.00" width="7.36" height="7.25" fill="#b1b6c1"/><rect x="1186.13" y="1143.00" width="7.36" height="7.25" fill="#acabb9"/><rect x="1193.24" y="1143.00" width="7.36" height="7.25" fill="#c1c4cc"/><rect x="1200.35" y="1143.00" width="7.36" height="7.25" fill="#a9adbc"/><rect x="1207.46" y="1143.00" width="7.36" height="7.25" fill="#9fa4b9"/><rect x="1214.57" y="1143.00" width="7.36" height="7.25" fill="#b5b8c3"/><rect x="1221.68" y="1143.00" width="7.36" height="7.25" fill="#b1b0be"/><rect x="1228.79" y="1143.00" width="7.36" height="7.25" fill="#a4aec3"/><rect x="1235.90" y="1143.00" width="7.36" height="7.25" fill="#a3a5b1"/><rect x="1243.01" y="1143.00" width="7.36" height="7.25" fill="#bfc1c9"/><rect x="1250.12" y="1143.00" width="7.36" height="7.25" fill="#9093a8"/><rect x="1257.23" y="1143.00" width="7.36" height="7.25" fill="#b1b5c5"/><rect x="1264.34" y="1143.00" width="7.36" height="7.25" fill="#a9b2bd"/><rect x="1271.45" y="1143.00" width="7.36" height="7.25" fill="#9f98ac"/><rect x="1278.56" y="1143.00" width="7.36" height="7.25" fill="#9aa3b5"/><rect x="1285.67" y="1143.00" width="7.36" height="7.25" fill="#a2b2c3"/><rect x="1292.78" y="1143.00" width="7.36" height="7.25" fill="#c4c7ce"/><rect x="1299.89" y="1143.00" width="7.36" height="7.25" fill="#8c9ab2"/><rect x="1307.00" y="1143.00" width="7.36" height="7.25" fill="#bcb5ba"/><rect x="1314.11" y="1143.00" width="7.36" height="7.25" fill="#a5b4c4"/><rect x="1321.22" y="1143.00" width="7.36" height="7.25" fill="#b4b6c7"/><rect x="1328.33" y="1143.00" width="7.36" height="7.25" fill="#a5a9b5"/><rect x="1335.44" y="1143.00" width="7.36" height="7.25" fill="#b5b5c0"/><rect x="1342.55" y="1143.00" width="7.36" height="7.25" fill="#93a4b9"/><rect x="1349.66" y="1143.00" width="7.36" height="7.25" fill="#afb5c2"/><rect x="1356.77" y="1143.00" width="7.36" height="7.25" fill="#abb5c3"/><rect x="1363.88" y="1143.00" width="7.36" height="7.25" fill="#b8b8c0"/><rect x="1370.99" y="1143.00" width="7.36" height="7.25" fill="#a8aec0"/><rect x="1378.10" y="1143.00" width="7.36" height="7.25" fill="#d5dde8"/><rect x="1385.21" y="1143.00" width="7.36" height="7.25" fill="#ebebef"/><rect x="1129.25" y="1150" width="7.36" height="6.8" fill="#d8dde9"/><rect x="214.30" y="42.90" width="7.2" height="7.1" fill="#d9dcdf"/><rect x="221.40" y="42.90" width="7.2" height="7.1" fill="#c9d4dc"/><rect x="200.10" y="49.90" width="7.2" height="7.1" fill="#cdd0d3"/><rect x="207.20" y="49.90" width="7.2" height="7.1" fill="#a9adb1"/><rect x="214.30" y="49.90" width="7.2" height="7.1" fill="#c3c7ca"/><rect x="221.40" y="49.90" width="7.2" height="7.1" fill="#9fa4a8"/><rect x="228.50" y="49.90" width="7.2" height="7.1" fill="#bfc7d0"/><rect x="200.10" y="56.90" width="7.2" height="7.1" fill="#b5b4b5"/><rect x="207.20" y="56.90" width="7.2" height="7.1" fill="#c5cacd"/><rect x="214.30" y="56.90" width="7.2" height="7.1" fill="#a8abad"/><rect x="221.40" y="56.90" width="7.2" height="7.1" fill="#b3bcc4"/><rect x="228.50" y="56.90" width="7.2" height="7.1" fill="#a9acb0"/><rect x="200.10" y="63.90" width="7.2" height="7.1" fill="#e1e6ea"/><rect x="207.20" y="63.90" width="7.2" height="7.1" fill="#c6ced4"/><rect x="214.30" y="63.90" width="7.2" height="7.1" fill="#dfe4e8"/><rect x="221.40" y="63.90" width="7.2" height="7.1" fill="#c3cbd1"/><rect x="228.50" y="63.90" width="7.2" height="7.1" fill="#dde2e6"/>
</svg>
<div class="t" style="left:76.60px;top:41px;font-family:'Liberation Sans', sans-serif;font-weight:700;font-size:30.09px;line-height:30.09px;color:#767676;transform:scaleX(0.8977);">Welcome</div><div class="t" style="left:233.82px;top:41px;font-family:'Liberation Sans', sans-serif;font-weight:700;font-size:30.09px;line-height:30.09px;color:#767676;transform:scaleX(0.8898);">, to Ongoing WMS</div><div class="t" style="left:75.78px;top:281px;font-family:'Liberation Sans', sans-serif;font-weight:700;font-size:28.92px;line-height:28.92px;color:#767676;transform:scaleX(0.9164);">Overview</div><div class="t" style="left:1469.67px;top:281px;font-family:'Liberation Sans', sans-serif;font-weight:700;font-size:28.92px;line-height:28.92px;color:#767676;transform:scaleX(0.9316);">Current status</div><div class="t" style="left:75.75px;top:1057px;font-family:'Liberation Sans', sans-serif;font-weight:700;font-size:29.36px;line-height:29.36px;color:#767676;transform:scaleX(0.9249);">Integrations and emails</div><div class="t" style="left:95.70px;top:120px;font-family:'Liberation Serif', serif;font-weight:400;font-size:20.92px;line-height:20.92px;color:#2b3a67;transform:scaleX(1.0700);-webkit-text-stroke:0.8px currentColor;letter-spacing:0.116px;">Orders with status Error</div><div class="t" style="left:560.30px;top:120px;font-family:'Liberation Serif', serif;font-weight:400;font-size:20.92px;line-height:20.92px;color:#2b3a67;transform:scaleX(1.0700);-webkit-text-stroke:0.8px currentColor;letter-spacing:0.008px;">Not pickable orders</div><div class="t" style="left:1024.80px;top:120px;font-family:'Liberation Serif', serif;font-weight:400;font-size:20.92px;line-height:20.92px;color:#2b3a67;transform:scaleX(1.0700);-webkit-text-stroke:0.8px currentColor;letter-spacing:0.199px;">Understocked articles</div><div class="t" style="left:1489.00px;top:120px;font-family:'Liberation Serif', serif;font-weight:400;font-size:20.92px;line-height:20.92px;color:#2b3a67;transform:scaleX(1.0700);-webkit-text-stroke:0.8px currentColor;letter-spacing:0.235px;">Integration errors</div><div class="t" style="left:95.23px;top:155px;font-family:'Liberation Sans', sans-serif;font-weight:700;font-size:33.43px;line-height:33.43px;color:#000;transform:scaleX(1.0688);">0</div><div class="t" style="left:559.41px;top:155px;font-family:'Liberation Sans', sans-serif;font-weight:700;font-size:33.43px;line-height:33.43px;color:#000;transform:scaleX(1.0938);">2</div><div class="t" style="left:1488.43px;top:155px;font-family:'Liberation Sans', sans-serif;font-weight:700;font-size:33.43px;line-height:33.43px;color:#000;transform:scaleX(1.0687);">0</div><div class="t" style="left:117.40px;top:366px;font-family:'Liberation Serif', serif;font-weight:400;font-size:21.99px;line-height:21.99px;color:#6e6e6e;-webkit-text-stroke:0.45px currentColor;letter-spacing:0.000px;">Today</div><div class="t" style="left:213.20px;top:366px;font-family:'Liberation Serif', serif;font-weight:400;font-size:21.99px;line-height:21.99px;color:#000;transform:scaleX(1.0189);-webkit-text-stroke:0.8px currentColor;letter-spacing:0.000px;">Last week</div><div class="t" style="left:334.20px;top:366px;font-family:'Liberation Serif', serif;font-weight:400;font-size:21.99px;line-height:21.99px;color:#6e6e6e;transform:scaleX(1.0150);-webkit-text-stroke:0.45px currentColor;letter-spacing:0.000px;">Last month</div><div class="t" style="left:465.50px;top:366px;font-family:'Liberation Serif', serif;font-weight:400;font-size:21.99px;line-height:21.99px;color:#6e6e6e;transform:scaleX(1.0185);-webkit-text-stroke:0.45px currentColor;letter-spacing:0.000px;">Last year</div><div class="t" style="left:156.99px;top:914px;font-family:'Liberation Sans', sans-serif;font-weight:400;font-size:15.99px;line-height:15.99px;color:#a3a3a3;transform:scaleX(1.0143);">0</div><div class="t" style="left:149.16px;top:888px;font-family:'Liberation Sans', sans-serif;font-weight:400;font-size:15.99px;line-height:15.99px;color:#a3a3a3;transform:scaleX(0.9375);">50</div><div class="t" style="left:141.28px;top:862px;font-family:'Liberation Sans', sans-serif;font-weight:400;font-size:15.99px;line-height:15.99px;color:#a3a3a3;transform:scaleX(0.9160);">100</div><div class="t" style="left:141.28px;top:836px;font-family:'Liberation Sans', sans-serif;font-weight:400;font-size:15.99px;line-height:15.99px;color:#a3a3a3;transform:scaleX(0.9160);">150</div><div class="t" style="left:141.28px;top:810px;font-family:'Liberation Sans', sans-serif;font-weight:400;font-size:15.99px;line-height:15.99px;color:#a3a3a3;transform:scaleX(0.9160);">200</div><div class="t" style="left:141.28px;top:785px;font-family:'Liberation Sans', sans-serif;font-weight:400;font-size:15.99px;line-height:15.99px;color:#a3a3a3;transform:scaleX(0.9160);">250</div><div class="t" style="left:141.28px;top:759px;font-family:'Liberation Sans', sans-serif;font-weight:400;font-size:15.99px;line-height:15.99px;color:#a3a3a3;transform:scaleX(0.9160);">300</div><div class="t" style="left:141.28px;top:733px;font-family:'Liberation Sans', sans-serif;font-weight:400;font-size:15.99px;line-height:15.99px;color:#a3a3a3;transform:scaleX(0.9160);">350</div><div class="t" style="left:142.20px;top:707px;font-family:'Liberation Sans', sans-serif;font-weight:400;font-size:15.99px;line-height:15.99px;color:#a3a3a3;transform:scaleX(0.8808);">400</div><div class="t" style="left:142.20px;top:681px;font-family:'Liberation Sans', sans-serif;font-weight:400;font-size:15.99px;line-height:15.99px;color:#a3a3a3;transform:scaleX(0.8808);">450</div><div class="t" style="left:141.28px;top:655px;font-family:'Liberation Sans', sans-serif;font-weight:400;font-size:15.99px;line-height:15.99px;color:#a3a3a3;transform:scaleX(0.9160);">500</div><div class="t" style="left:141.28px;top:629px;font-family:'Liberation Sans', sans-serif;font-weight:400;font-size:15.99px;line-height:15.99px;color:#a3a3a3;transform:scaleX(0.9160);">550</div><div class="t" style="left:141.28px;top:603px;font-family:'Liberation Sans', sans-serif;font-weight:400;font-size:15.99px;line-height:15.99px;color:#a3a3a3;transform:scaleX(0.9160);">600</div><div class="t" style="left:141.28px;top:577px;font-family:'Liberation Sans', sans-serif;font-weight:400;font-size:15.99px;line-height:15.99px;color:#a3a3a3;transform:scaleX(0.9160);">650</div><div class="t" style="left:141.28px;top:552px;font-family:'Liberation Sans', sans-serif;font-weight:400;font-size:15.99px;line-height:15.99px;color:#a3a3a3;transform:scaleX(0.9160);">700</div><div class="t" style="left:141.28px;top:526px;font-family:'Liberation Sans', sans-serif;font-weight:400;font-size:15.99px;line-height:15.99px;color:#a3a3a3;transform:scaleX(0.9160);">750</div><div class="t" style="left:141.28px;top:500px;font-family:'Liberation Sans', sans-serif;font-weight:400;font-size:15.99px;line-height:15.99px;color:#a3a3a3;transform:scaleX(0.9160);">800</div><div class="t" style="left:141.28px;top:474px;font-family:'Liberation Sans', sans-serif;font-weight:400;font-size:15.99px;line-height:15.99px;color:#a3a3a3;transform:scaleX(0.9160);">850</div><div class="t" style="left:141.28px;top:448px;font-family:'Liberation Sans', sans-serif;font-weight:400;font-size:15.99px;line-height:15.99px;color:#a3a3a3;transform:scaleX(0.9160);">900</div><div class="t" style="left:141.28px;top:422px;font-family:'Liberation Sans', sans-serif;font-weight:400;font-size:15.99px;line-height:15.99px;color:#a3a3a3;transform:scaleX(0.9160);">950</div><div class="t" style="left:187.18px;top:933px;font-family:'Liberation Sans', sans-serif;font-weight:400;font-size:15.26px;line-height:15.26px;color:#a3a3a3;transform:scaleX(0.9087);">Wednesday, 16</div><div class="t" style="left:212.48px;top:947px;font-family:'Liberation Sans', sans-serif;font-weight:400;font-size:15.26px;line-height:15.26px;color:#a3a3a3;transform:scaleX(0.9146);">August</div><div class="t" style="left:319.43px;top:933px;font-family:'Liberation Sans', sans-serif;font-weight:400;font-size:15.26px;line-height:15.26px;color:#a3a3a3;transform:scaleX(0.9253);">Thursday, 17</div><div class="t" style="left:337.73px;top:947px;font-family:'Liberation Sans', sans-serif;font-weight:400;font-size:15.26px;line-height:15.26px;color:#a3a3a3;transform:scaleX(0.9146);">August</div><div class="t" style="left:429.85px;top:933px;font-family:'Liberation Sans', sans-serif;font-weight:400;font-size:15.26px;line-height:15.26px;color:#a3a3a3;transform:scaleX(0.9256);">Friday, 18 August</div><div class="t" style="left:570.76px;top:933px;font-family:'Liberation Sans', sans-serif;font-weight:400;font-size:15.26px;line-height:15.26px;color:#a3a3a3;transform:scaleX(0.9167);">Saturday, 19</div><div class="t" style="left:588.22px;top:947px;font-family:'Liberation Sans', sans-serif;font-weight:400;font-size:15.26px;line-height:15.26px;color:#a3a3a3;transform:scaleX(0.9146);">August</div><div class="t" style="left:676.25px;top:933px;font-family:'Liberation Sans', sans-serif;font-weight:400;font-size:15.26px;line-height:15.26px;color:#a3a3a3;transform:scaleX(0.9246);">Sunday, 20 August</div><div class="t" style="left:799.24px;top:933px;font-family:'Liberation Sans', sans-serif;font-weight:400;font-size:15.26px;line-height:15.26px;color:#a3a3a3;transform:scaleX(0.9380);">Monday, 21 August</div><div class="t" style="left:924.42px;top:933px;font-family:'Liberation Sans', sans-serif;font-weight:400;font-size:15.26px;line-height:15.26px;color:#a3a3a3;transform:scaleX(0.9248);">Tuesday, 22 August</div><div class="t" style="left:1063.92px;top:933px;font-family:'Liberation Sans', sans-serif;font-weight:400;font-size:15.26px;line-height:15.26px;color:#a3a3a3;transform:scaleX(0.9087);">Wednesday, 23</div><div class="t" style="left:1089.22px;top:947px;font-family:'Liberation Sans', sans-serif;font-weight:400;font-size:15.26px;line-height:15.26px;color:#a3a3a3;transform:scaleX(0.9146);">August</div><div class="t" style="left:1218.30px;top:430px;font-family:'Liberation Serif', serif;font-weight:400;font-size:22.3px;line-height:22.3px;color:#2b3a67;-webkit-text-stroke:0.8px currentColor;letter-spacing:0.000px;">Created orders</div><div class="t" style="left:1217.95px;top:468px;font-family:'Liberation Sans', sans-serif;font-weight:400;font-size:24.13px;line-height:24.13px;color:#000;transform:scaleX(1.0542);-webkit-text-stroke:0.85px currentColor;">2,362</div><div class="t" style="left:1310.00px;top:472px;font-family:'Liberation Sans', sans-serif;font-weight:400;font-size:18.31px;line-height:18.31px;color:#e8605a;transform:scaleX(1.0366);-webkit-text-stroke:0.85px currentColor;">-11%</div><div class="t" style="left:1244.83px;top:507px;font-family:'Liberation Sans', sans-serif;font-weight:400;font-size:17.15px;line-height:17.15px;color:#222;transform:scaleX(0.9738);">Show in diagram</div><div class="t" style="left:1218.30px;top:570px;font-family:'Liberation Serif', serif;font-weight:400;font-size:22.3px;line-height:22.3px;color:#2b3a67;transform:scaleX(1.0156);-webkit-text-stroke:0.8px currentColor;letter-spacing:0.000px;">Picked orders</div><div class="t" style="left:1217.95px;top:608px;font-family:'Liberation Sans', sans-serif;font-weight:400;font-size:24.13px;line-height:24.13px;color:#000;transform:scaleX(1.0508);-webkit-text-stroke:0.85px currentColor;">2,517</div><div class="t" style="left:1309.90px;top:613px;font-family:'Liberation Sans', sans-serif;font-weight:400;font-size:18.31px;line-height:18.31px;color:#e8605a;transform:scaleX(0.9812);-webkit-text-stroke:0.85px currentColor;">-6%</div><div class="t" style="left:1244.83px;top:648px;font-family:'Liberation Sans', sans-serif;font-weight:400;font-size:17.15px;line-height:17.15px;color:#222;transform:scaleX(0.9738);">Show in diagram</div><div class="t" style="left:1247.40px;top:711px;font-family:'Liberation Serif', serif;font-weight:400;font-size:22.3px;line-height:22.3px;color:#2b3a67;transform:scaleX(1.0059);-webkit-text-stroke:0.8px currentColor;letter-spacing:0.000px;">Received articles</div><div class="t" style="left:1219.00px;top:773px;font-family:'Liberation Sans', sans-serif;font-weight:400;font-size:24.13px;line-height:24.13px;color:#000;transform:scaleX(1.0692);-webkit-text-stroke:0.85px currentColor;">52</div><div class="t" style="left:1275.40px;top:778px;font-family:'Liberation Sans', sans-serif;font-weight:400;font-size:18.31px;line-height:18.31px;color:#5aa873;transform:scaleX(0.9778);-webkit-text-stroke:0.85px currentColor;">58%</div><div class="t" style="left:1244.83px;top:811px;font-family:'Liberation Sans', sans-serif;font-weight:400;font-size:17.15px;line-height:17.15px;color:#222;transform:scaleX(0.9738);">Show in diagram</div><div class="t" style="left:1218.50px;top:874px;font-family:'Liberation Serif', serif;font-weight:400;font-size:22.3px;line-height:22.3px;color:#2b3a67;transform:scaleX(1.0196);-webkit-text-stroke:0.8px currentColor;letter-spacing:0.000px;">Returned orders</div><div class="t" style="left:1219.00px;top:911px;font-family:'Liberation Sans', sans-serif;font-weight:400;font-size:24.13px;line-height:24.13px;color:#000;transform:scaleX(1.0074);-webkit-text-stroke:0.85px currentColor;">85</div><div class="t" style="left:1275.00px;top:916px;font-family:'Liberation Sans', sans-serif;font-weight:400;font-size:18.31px;line-height:18.31px;color:#e8605a;transform:scaleX(0.9154);-webkit-text-stroke:0.85px currentColor;">6%</div><div class="t" style="left:1244.83px;top:952px;font-family:'Liberation Sans', sans-serif;font-weight:400;font-size:17.15px;line-height:17.15px;color:#222;transform:scaleX(0.9738);">Show in diagram</div><div class="t" style="left:1525.60px;top:822px;font-family:'Liberation Sans', sans-serif;font-weight:400;font-size:21.22px;line-height:21.22px;color:#1c1c28;transform:scaleX(0.9013);">Pickable</div><div class="t" style="left:1855.75px;top:823px;font-family:'Liberation Sans', sans-serif;font-weight:700;font-size:18.9px;line-height:18.9px;color:#000;transform:scaleX(1.0526);">11</div><div class="t" style="left:1525.58px;top:863px;font-family:'Liberation Sans', sans-serif;font-weight:400;font-size:21.22px;line-height:21.22px;color:#1c1c28;transform:scaleX(0.9123);">Not pickable</div><div class="t" style="left:1865.47px;top:865px;font-family:'Liberation Sans', sans-serif;font-weight:700;font-size:18.9px;line-height:18.9px;color:#000;transform:scaleX(1.1333);">2</div><div class="t" style="left:1525.61px;top:905px;font-family:'Liberation Sans', sans-serif;font-weight:400;font-size:21.22px;line-height:21.22px;color:#1c1c28;transform:scaleX(0.8951);">Picked</div><div class="t" style="left:1855.06px;top:907px;font-family:'Liberation Sans', sans-serif;font-weight:700;font-size:18.9px;line-height:18.9px;color:#000;transform:scaleX(1.0350);">21</div><div class="t" style="left:1526.53px;top:947px;font-family:'Liberation Sans', sans-serif;font-weight:400;font-size:21.22px;line-height:21.22px;color:#1c1c28;transform:scaleX(0.8750);">Shipped</div><div class="t" style="left:1843.73px;top:948px;font-family:'Liberation Sans', sans-serif;font-weight:700;font-size:18.9px;line-height:18.9px;color:#000;transform:scaleX(1.0667);">335</div><div class="t" style="left:1549.00px;top:347px;font-family:'Liberation Serif', serif;font-weight:400;font-size:21.69px;line-height:21.69px;color:#000;transform:scaleX(1.0169);-webkit-text-stroke:0.8px currentColor;letter-spacing:0.000px;">Orders</div><div class="t" style="left:1723.50px;top:347px;font-family:'Liberation Serif', serif;font-weight:400;font-size:21.69px;line-height:21.69px;color:#707070;transform:scaleX(1.0659);-webkit-text-stroke:0.45px currentColor;letter-spacing:0.000px;">Purchase orders</div><div class="t" style="left:94.78px;top:1166px;font-family:'Liberation Sans', sans-serif;font-weight:400;font-size:15.41px;line-height:15.41px;color:#737373;transform:scaleX(0.9213);">Succeeded</div><div class="t" style="left:94.68px;top:1187px;font-family:'Liberation Sans', sans-serif;font-weight:400;font-size:16.28px;line-height:16.28px;color:#1e1e1e;transform:scaleX(0.9168);">23/08/2023 15:00</div><div class="t" style="left:559.58px;top:1166px;font-family:'Liberation Sans', sans-serif;font-weight:400;font-size:15.41px;line-height:15.41px;color:#737373;transform:scaleX(0.9227);">Succeeded</div><div class="t" style="left:559.58px;top:1187px;font-family:'Liberation Sans', sans-serif;font-weight:400;font-size:16.28px;line-height:16.28px;color:#1e1e1e;transform:scaleX(0.9152);">23/08/2023 07:30</div><div class="t" style="left:1024.07px;top:1166px;font-family:'Liberation Sans', sans-serif;font-weight:400;font-size:15.41px;line-height:15.41px;color:#737373;transform:scaleX(0.9345);">Last request</div><div class="t" style="left:1024.09px;top:1187px;font-family:'Liberation Sans', sans-serif;font-weight:400;font-size:16.28px;line-height:16.28px;color:#1e1e1e;transform:scaleX(0.9144);">23/08/2023 16:33</div><div class="t" style="left:1163.78px;top:1166px;font-family:'Liberation Sans', sans-serif;font-weight:400;font-size:15.41px;line-height:15.41px;color:#737373;transform:scaleX(0.9247);">Order created</div><div class="t" style="left:1163.79px;top:1187px;font-family:'Liberation Sans', sans-serif;font-weight:400;font-size:16.28px;line-height:16.28px;color:#1e1e1e;transform:scaleX(0.9144);">23/08/2023 16:38</div><div class="t" style="left:1303.79px;top:1166px;font-family:'Liberation Sans', sans-serif;font-weight:400;font-size:15.41px;line-height:15.41px;color:#737373;transform:scaleX(0.9145);">PO created</div><div class="t" style="left:1303.79px;top:1187px;font-family:'Liberation Sans', sans-serif;font-weight:400;font-size:16.28px;line-height:16.28px;color:#1e1e1e;transform:scaleX(0.9144);">23/08/2023 16:05</div>
</body></html>
